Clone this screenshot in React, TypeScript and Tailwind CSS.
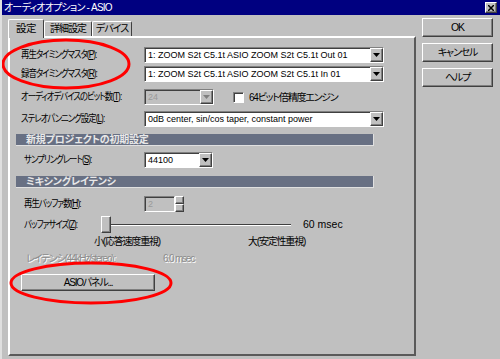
import React from 'react';

const raised =
  'border border-t-white border-l-white border-r-[#404040] border-b-[#404040] shadow-[inset_-1px_-1px_0_#808080]';
const sunken =
  'border border-t-[#808080] border-l-[#808080] border-r-white border-b-white shadow-[inset_1px_1px_0_#404040]';
// 日本語テキスト用 (MS UI Gothic 風に詰める)
const jp = 'whitespace-nowrap text-[10px] tracking-[-1.2px]';

function Arrow({ disabled }: { disabled?: boolean }) {
  return (
    <div className={`flex w-[13px] shrink-0 items-center justify-center bg-[#c0c0c0] ${raised}`}>
      <svg width="7" height="4" viewBox="0 0 7 4">
        <path d="M0 0h7L3.5 4z" fill={disabled ? '#808080' : '#000'} />
      </svg>
    </div>
  );
}

function Select({ value, className, disabled }: { value: string; className: string; disabled?: boolean }) {
  return (
    <div className={`flex h-[16px] ${sunken} ${disabled ? 'bg-[#c0c0c0]' : 'bg-white'} ${className}`}>
      <div className={`flex-1 truncate pl-[3px] text-[9px] leading-[14px] ${disabled ? 'text-[#9a9a9a]' : 'text-black'}`}>{value}</div>
      <Arrow disabled={disabled} />
    </div>
  );
}

// ラベルは半角カナ幅に近づけるため横方向に少し縮める
function Label({ children, className = 'w-[123px]' }: { children: React.ReactNode; className?: string }) {
  return (
    <div className={`shrink-0 leading-[16px] ${jp} ${className}`}>
      <span className="inline-block origin-left scale-x-[0.84]">{children}</span>
    </div>
  );
}

function Bar({ title }: { title: string }) {
  return (
    <div className="ml-[-5px] h-[12px] w-[358px] whitespace-nowrap bg-[#687083] pl-[10px] text-[10px] leading-[12px] font-bold tracking-[-0.2px] text-[#e8e8e8] border-r border-b border-r-[#e0e0e0] border-b-[#e0e0e0]">
      {title}
    </div>
  );
}

function Button({ children, className }: { children: React.ReactNode; className: string }) {
  return (
    <div className={`flex items-center justify-center whitespace-nowrap bg-[#c0c0c0] text-black ${raised} ${className}`}>{children}</div>
  );
}

export default function App() {
  return (
    <div className="relative h-[359px] w-[500px] overflow-hidden bg-[#c0c0c0] text-[10px] text-black font-['Liberation_Sans','Noto_Sans_CJK_JP',sans-serif] [font-feature-settings:'palt'] border-l-2 border-l-[#dfdfdf]">
      {/* タイトルバー */}
      <div className="flex h-[15px] items-center justify-between bg-[#000080] pl-[2px] pr-[3px]">
        <span className="whitespace-nowrap text-[10px] leading-[15px] tracking-[-0.8px] text-white">オーディオオプション - ASIO</span>
        <div className={`flex h-[11px] w-[12px] items-center justify-center bg-[#c0c0c0] ${raised}`}>
          <svg width="6" height="6" viewBox="0 0 6 6">
            <path d="M0 0L6 6M6 0L0 6" stroke="#000" strokeWidth="1.5" />
          </svg>
        </div>
      </div>

      <div className="flex">
        {/* 左: タブ */}
        <div className="ml-[6px] w-[408px]">
          <div className="mt-[4px] flex h-[17px] items-end">
            <div className="relative z-10 mb-[-2px] h-[19px] w-[36px] rounded-t-[2px] border border-b-0 border-t-white border-l-white border-r-[#404040] bg-[#c0c0c0] text-center text-[10.5px] leading-[16px] tracking-[-0.5px]">
              設定
            </div>
            <div className="h-[15px] w-[48px] whitespace-nowrap rounded-t-[2px] border border-b-0 border-t-white border-l-white border-r-[#404040] text-center text-[10px] leading-[14px] tracking-[-1px]">
              詳細設定
            </div>
            <div className="h-[15px] w-[40px] whitespace-nowrap rounded-t-[2px] border border-b-0 border-t-white border-l-white border-r-[#404040] text-center text-[10px] leading-[14px] tracking-[-1px]">
              デバイス
            </div>
          </div>

          <div className="flex h-[320px] flex-col border-2 border-t-white border-l-white border-r-[#5a5a5a] border-b-[#5a5a5a] pl-[11px]">
            <div className="mt-[9px] flex">
              <Label>再生タイミングマスタ(<u>P</u>):</Label>
              <Select className="w-[240px]" value="1: ZOOM S2t C5.1t ASIO ZOOM S2t C5.1t Out 01" />
            </div>
            <div className="mt-[3px] flex">
              <Label>録音タイミングマスタ(<u>R</u>):</Label>
              <Select className="w-[240px]" value="1: ZOOM S2t C5.1t ASIO ZOOM S2t C5.1t In 01" />
            </div>
            <div className="mt-[7px] flex items-center">
              <Label>オーディオデバイスのビット数(<u>T</u>):</Label>
              <Select className="w-[70px]" value="24" disabled />
              <div className={`ml-[19px] h-[11px] w-[11px] bg-white ${sunken}`} />
              <span className={`ml-[5px] ${jp}`}>64ビット倍精度エンジン</span>
            </div>
            <div className="mt-[6px] flex">
              <Label>ステレオパンニング設定(<u>L</u>):</Label>
              <Select className="w-[240px]" value="0dB center, sin/cos taper, constant power" />
            </div>
            <div className="mt-[7px]">
              <Bar title="新規プロジェクトの初期設定" />
            </div>
            <div className="mt-[6px] flex">
              <Label className="w-[123px] pl-[3px]">サンプリングレート(<u>S</u>):</Label>
              <Select className="w-[69px]" value="44100" />
            </div>
            <div className="mt-[8px]">
              <Bar title="ミキシングレイテンシ" />
            </div>
            <div className="mt-[8px] flex">
              <Label className="w-[123px] pl-[3px]">再生バッファ数(<u>H</u>):</Label>
              <div className="flex h-[16px]">
                <div className={`w-[31px] bg-[#c0c0c0] pl-[3px] text-[9px] leading-[14px] text-[#9a9a9a] ${sunken}`}>2</div>
                <div className="flex w-[9px] flex-col">
                  <div className={`flex-1 ${raised}`} />
                  <div className={`flex-1 ${raised}`} />
                </div>
              </div>
            </div>
            <div className="mt-[4px] flex items-center">
              <Label className="w-[80px] pl-[3px]">バッファサイズ(<u>Z</u>):</Label>
              <div className="relative flex h-[17px] w-[190px] items-center">
                <div className="h-[2px] w-full border-t border-t-[#404040] border-b border-b-white" />
                <div className={`absolute left-[0px] top-0 h-[17px] w-[10px] bg-[#c0c0c0] ${raised}`} />
              </div>
              <span className="ml-[12px] text-[10.5px]">60 msec</span>
            </div>
            <div className={`mt-[3px] flex leading-[12px] ${jp}`}>
              <span className="ml-[73px] w-[154px]">小(応答速度重視)</span>
              <span>大(安定性重視)</span>
            </div>
            <div className={`mt-[5px] flex leading-[12px] text-[#8c8c8c] [text-shadow:1px_1px_0_#ffffff] ${jp}`}>
              <span className="ml-[5px] w-[137px]">レイテンシ(44kHz/stereo):</span>
              <span>6.0 msec</span>
            </div>
            <Button className={`mt-[9px] h-[17px] w-[134px] shadow-[inset_-1px_-1px_0_#808080,0_0_0_1px_#000] ${jp}`}>ASIOパネル...</Button>
          </div>
        </div>

        {/* 右: ボタン */}
        <div className={`ml-[6px] mt-[3px] flex w-[71px] flex-col gap-[6px] ${jp}`}>
          <Button className="h-[19px] w-full text-[10.5px]">OK</Button>
          <Button className="h-[19px] w-full">キャンセル</Button>
          <Button className="h-[19px] w-full">ヘルプ</Button>
        </div>
      </div>

      {/* 赤い丸印 */}
      <svg className="pointer-events-none absolute left-[-2px] top-0" width="500" height="359">
        <ellipse cx="66" cy="64" rx="63" ry="24" fill="none" stroke="#ff0000" strokeWidth="3" />
        <ellipse cx="91" cy="283" rx="80" ry="20" fill="none" stroke="#ff0000" strokeWidth="3" />
      </svg>
    </div>
  );
}
